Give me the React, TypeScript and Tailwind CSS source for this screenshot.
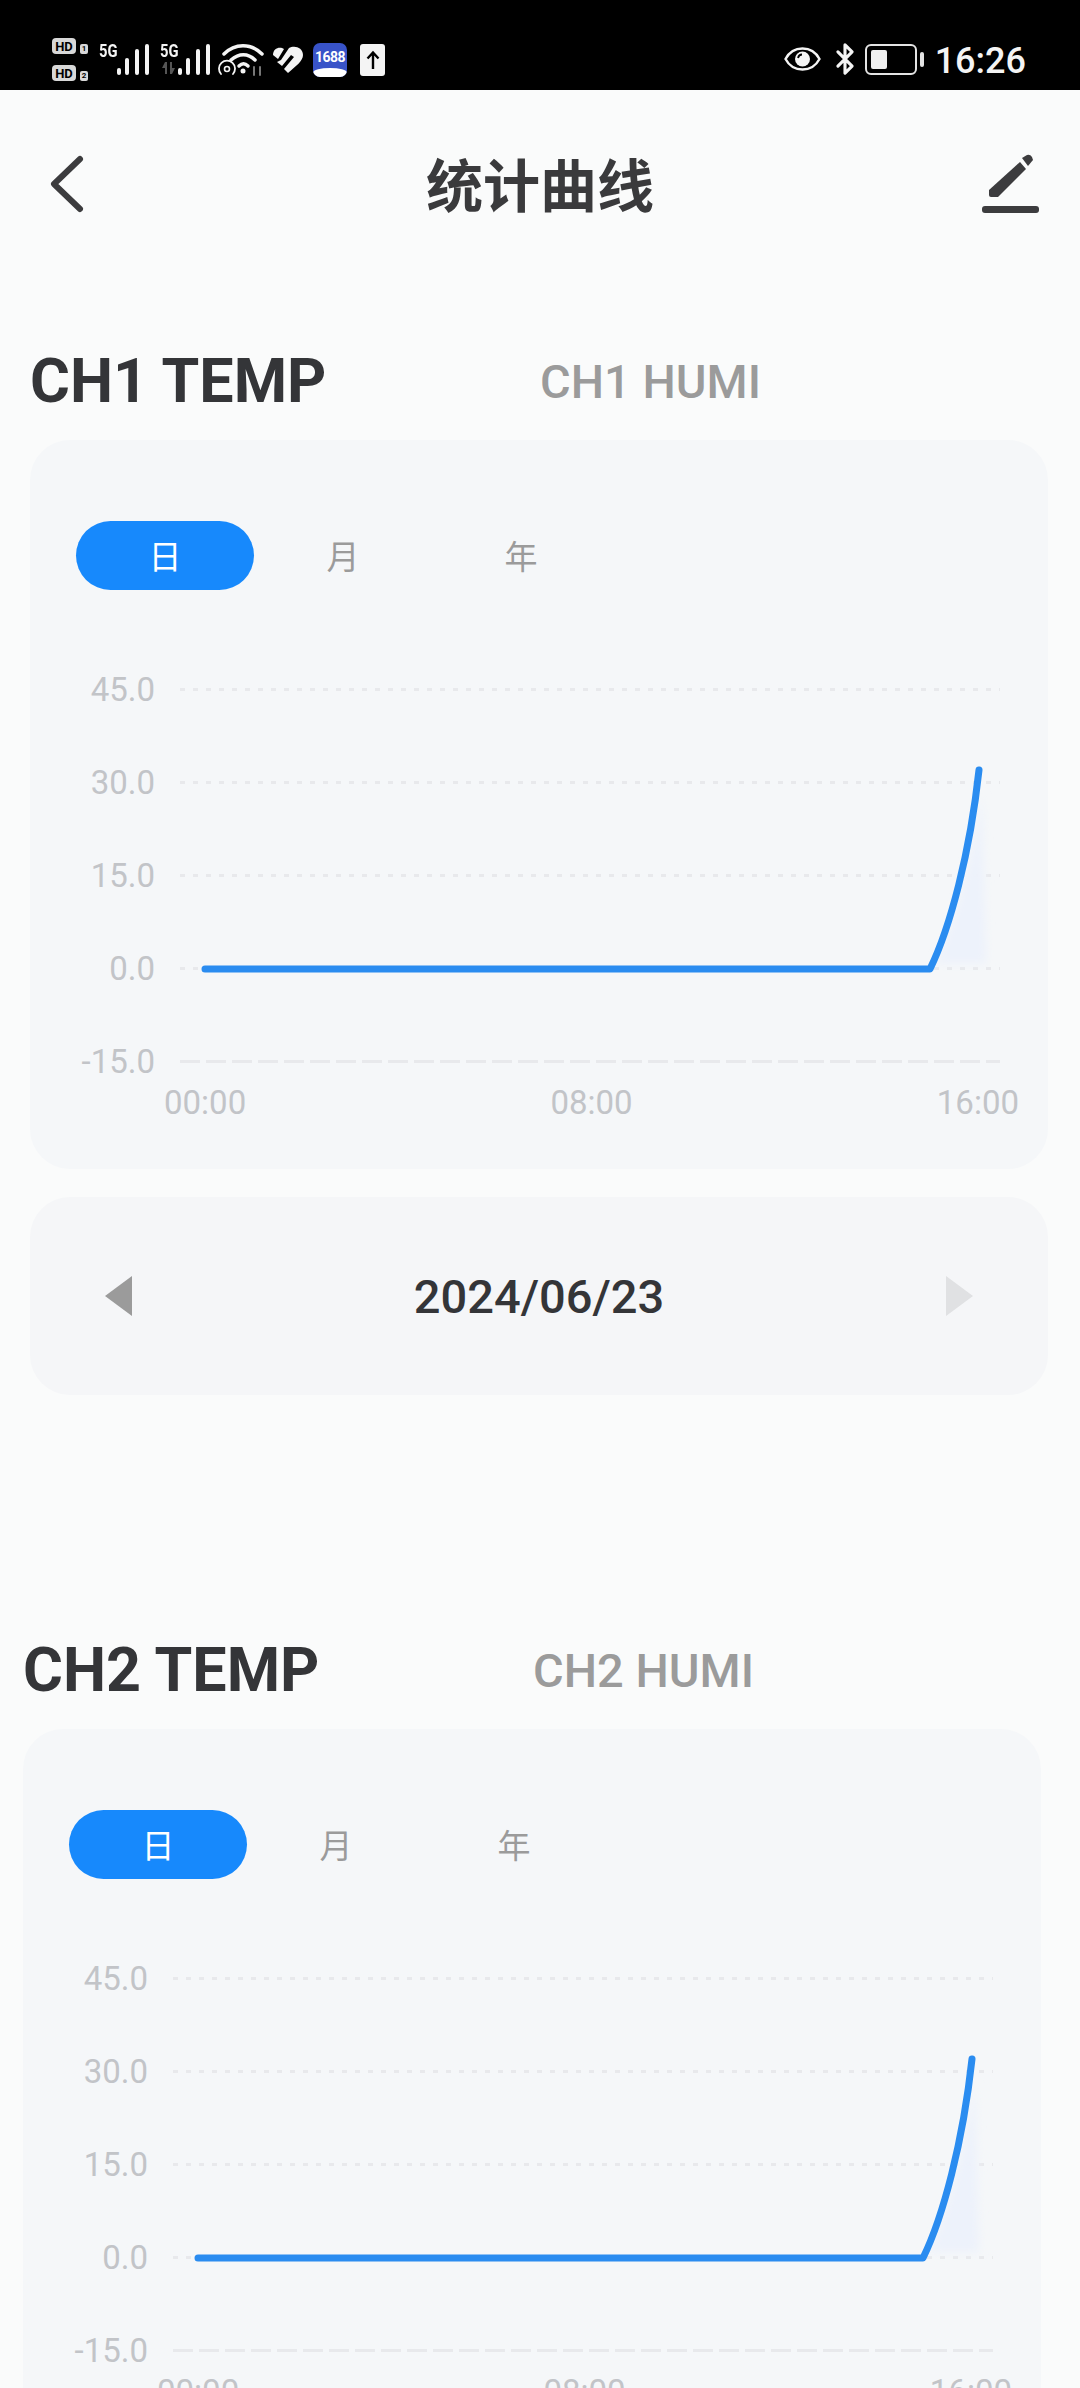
import { Bluetooth } from 'lucide-react';

const SignalBars = ({ arrows }: { arrows?: boolean }) => (
  <div className="flex w-[61px] items-start">
    <div className="flex w-[18px] flex-col">
      <span className="origin-left scale-x-[0.82] font-[Roboto,sans-serif] text-[18px] leading-[13px] font-bold whitespace-nowrap text-[#f4f4f4]">
        5G
      </span>
      {arrows && (
        <svg className="mt-[5px]" width="17" height="12" viewBox="0 0 17 12" fill="#555">
          <path d="M5 0 v12 h2 v-12z M2 6 l3 -6 v6z" />
          <path d="M10 0 v12 h2 l3 -6 h-3 v-6z" />
        </svg>
      )}
    </div>
    <svg width="43" height="32" viewBox="18 0 43 32" fill="none">
      {[
        [20, 26],
        [28, 16],
        [38, 7],
        [48, 2],
      ].map(([x, y1]) => (
        <line key={x} x1={x} y1={y1} x2={x} y2={29} stroke="#f4f4f4" strokeWidth="4" strokeLinecap="round" />
      ))}
    </svg>
  </div>
);

const StatusBar = () => (
  <div className="flex h-[90px] w-full shrink-0 items-start bg-black pt-[38px] pr-[54px] pl-[52px]">
    <div className="flex w-[47px] flex-col gap-[11px]">
      {['1', '2'].map((n) => (
        <div key={n} className="flex items-end gap-[4px]">
          <span className="flex h-[16px] w-[24px] items-center justify-center rounded-[4px] bg-[#d8d8d8] font-[Roboto,sans-serif] text-[13px] leading-none font-bold text-black">
            HD
          </span>
          <span className="flex h-[10px] w-[8px] items-center justify-center rounded-[2px] bg-[#d8d8d8] font-[Roboto,sans-serif] text-[8px] leading-none font-bold text-black">
            {n}
          </span>
        </div>
      ))}
    </div>
    <div className="flex items-start pt-[6px]">
      <SignalBars />
      <SignalBars arrows />
      <svg className="-mt-[1px] ml-[-3px]" width="48" height="34" viewBox="0 0 48 34" fill="none" stroke="#f4f4f4" strokeLinecap="round">
        <path d="M6 11 C17 0 33 0 44 11" strokeWidth="3.5" />
        <path d="M13 17 C21 10 30 10 37 17" strokeWidth="3.5" />
        <path d="M21 23 C24 20 27 20 30 23" strokeWidth="3.5" />
        <circle cx="25" cy="28" r="2.5" fill="#f4f4f4" stroke="none" />
        <path d="M3 31 A8 8 0 1 1 15 31" strokeWidth="1.8" />
        <circle cx="9" cy="26" r="2.5" strokeWidth="1.6" />
        <path d="M36 24 v8 M42 24 v8" stroke="#777" strokeWidth="2" />
      </svg>
      <svg className="mt-[2px] ml-[6px]" width="32" height="27" viewBox="0 0 32 27">
        <path d="M1 9 C1 2 8 0 12 3 L6 13 Z M9 14 L17 2 C22 -1 31 1 31 9 C31 15 24 20 16 27 L12 23 L22 11 L19 9 L10 20 L5 16 Z" fill="#f4f4f4" />
      </svg>
      <div className="-mt-[1px] ml-[9px] flex h-[34px] w-[34px] flex-col items-center overflow-hidden rounded-[7px] bg-[#3853c8]">
        <span className="mt-[7px] font-[Roboto,sans-serif] text-[14px] leading-none font-bold tracking-[-0.5px] text-white">1688</span>
        <span className="mt-auto h-[9px] w-full rounded-t-[50%] bg-white" />
      </div>
      <div className="ml-[13px] flex h-[32px] w-[25px] items-center justify-center rounded-[3px] bg-[#f4f4f4]">
        <svg width="14" height="20" viewBox="0 0 14 20" fill="none" stroke="#000" strokeWidth="2.4">
          <path d="M7 19 V3 M1.5 8.5 L7 2.5 L12.5 8.5" />
        </svg>
      </div>
    </div>
    <div className="ml-auto flex items-start pt-[6px]">
      <svg className="mt-[2px]" width="37" height="26" viewBox="0 0 37 26" fill="none" stroke="#f4f4f4">
        <path d="M1.5 13 C9 -1 28 -1 35.5 13 C28 27 9 27 1.5 13 Z" strokeWidth="2.4" />
        <circle cx="18.5" cy="13" r="7.5" fill="#f4f4f4" stroke="none" />
        <path d="M14 12 C14.5 10 16 8.5 18 8.5" stroke="#000" strokeWidth="1.8" />
      </svg>
      <Bluetooth className="-mt-[2px] ml-[7px]" size={34} color="#f4f4f4" strokeWidth={2.2} />
      <div className="ml-[3px] flex h-[31px] w-[52px] items-center rounded-[6px] border-[2px] border-[#e4e4e4] px-[4px]">
        <span className="h-[19px] w-[16px] rounded-[2px] bg-[#efefef]" />
      </div>
      <span className="mt-[8px] ml-[3px] h-[15px] w-[4px] rounded-[2px] bg-[#e4e4e4]" />
      <span className="-mt-[4px] ml-[11px] font-[Roboto,sans-serif] text-[36px] leading-[42px] font-medium text-[#f4f4f4]">16:26</span>
    </div>
  </div>
);

const NavBar = () => (
  <div className="flex h-[196px] w-full shrink-0 items-start justify-between px-[41px] pt-[64px]">
    <div className="w-[57px] pl-[7px]">
      <svg width="40" height="60" viewBox="0 0 40 60" fill="none">
        <path d="M32 5 L6 30 L32 55" stroke="#3c3c3e" strokeWidth="6" strokeLinecap="round" strokeLinejoin="round" />
      </svg>
    </div>
    <h1 className="font-['Noto_Sans_CJK_SC',sans-serif] text-[57px] leading-none font-bold text-[#3a3a3c]">统计曲线</h1>
    <svg width="57" height="60" viewBox="0 0 57 60" fill="#3c3c3e">
      <path d="M7 36 L38 8 L44 15 L16 43 L9 43 Q7 43 7 41 Z" />
      <path d="M40 4 L45 1 Q48 0 50 3 L51 6 L46 12 Z" />
      <rect x="0" y="52" width="57" height="7" rx="3" />
    </svg>
  </div>
);

const Legend = ({ ch }: { ch: string }) => (
  <div className="flex h-[72px] items-center">
    <span className="w-[510px] font-[Roboto,sans-serif] text-[61px] leading-none font-bold text-[#343538]">
      {ch} TEMP
    </span>
    <span className="font-[Roboto,sans-serif] text-[47px] leading-none font-medium text-[#9b9b9b]">{ch} HUMI</span>
  </div>
);

const Tabs = () => (
  <div className="flex pt-[81px] pl-[46px]">
    {['日', '月', '年'].map((t, i) => (
      <div
        key={t}
        className={
          i === 0
            ? "flex h-[69px] w-[178px] items-center justify-center rounded-full bg-[#1789fc] font-['Noto_Sans_CJK_SC',sans-serif] text-[33px] text-white"
            : "flex h-[69px] w-[178px] items-center justify-center font-['Noto_Sans_CJK_SC',sans-serif] text-[33px] text-[#9b9b9b]"
        }
      >
        {t}
      </div>
    ))}
  </div>
);

const Chart = () => (
  <div className="relative mt-[53px] w-full">
    <div className="flex flex-col">
      {['45.0', '30.0', '15.0', '0.0', '-15.0'].map((v, i) => (
        <div key={v} className="flex h-[93px] items-center">
          <span className="w-[125px] text-right font-[Roboto,sans-serif] text-[33px] leading-none text-[#c2c4c8]">{v}</span>
          <svg className="ml-[25px]" width="820" height="3" viewBox="0 0 820 3">
            <line
              x1="0"
              y1="1.5"
              x2="820"
              y2="1.5"
              stroke="#e8e9ec"
              strokeWidth="3"
              strokeDasharray={i === 4 ? '20 6' : '5 8'}
            />
          </svg>
        </div>
      ))}
    </div>
    <svg className="absolute top-0 left-0" width="1018" height="465" viewBox="0 0 1018 465" fill="none">
      <defs>
        <filter id="soft" x="-30%" y="-30%" width="160%" height="160%">
          <feGaussianBlur stdDeviation="4" />
        </filter>
      </defs>
      <path d="M905 320 C925 285 942 210 952 150 L956 320 Z" fill="#edf2fb" filter="url(#soft)" />
      <path
        d="M175 326 H900 C920 285 940 210 949 127"
        stroke="#2a8cf0"
        strokeWidth="7"
        strokeLinecap="round"
        strokeLinejoin="round"
      />
    </svg>
    <div className="-mt-[25px] flex w-[989px] justify-between pl-[134px] font-[Roboto,sans-serif] text-[33px] leading-[40px] text-[#c2c4c8]">
      <span>00:00</span>
      <span>08:00</span>
      <span>16:00</span>
    </div>
  </div>
);

const DateBar = () => (
  <div className="mt-[28px] flex h-[198px] w-[1018px] items-center justify-between rounded-[40px] bg-[#f5f6f8] px-[75px]">
    <svg width="27" height="40" viewBox="0 0 27 40">
      <path d="M27 0 V40 L0 20 Z" fill="#9b9b9b" />
    </svg>
    <span className="font-[Roboto,sans-serif] text-[47px] leading-none font-medium text-[#343538]">2024/06/23</span>
    <svg width="27" height="40" viewBox="0 0 27 40">
      <path d="M0 0 V40 L27 20 Z" fill="#e0e1e3" />
    </svg>
  </div>
);

const Section = ({ ch, showDate, className }: { ch: string; showDate?: boolean; className: string }) => (
  <section className={className}>
    <Legend ch={ch} />
    <div className="mt-[23px] h-[729px] w-[1018px] overflow-hidden rounded-[40px] bg-[#f5f7f9]">
      <Tabs />
      <Chart />
    </div>
    {showDate && <DateBar />}
  </section>
);

export default function App() {
  return (
    <div className="flex h-[2388px] w-[1080px] flex-col overflow-hidden bg-[#fafbfb]">
      <StatusBar />
      <NavBar />
      <Section ch="CH1" showDate className="ml-[30px] w-[1020px] shrink-0 pt-[59px]" />
      <Section ch="CH2" className="ml-[23px] w-[1020px] shrink-0 pt-[239px]" />
    </div>
  );
}
